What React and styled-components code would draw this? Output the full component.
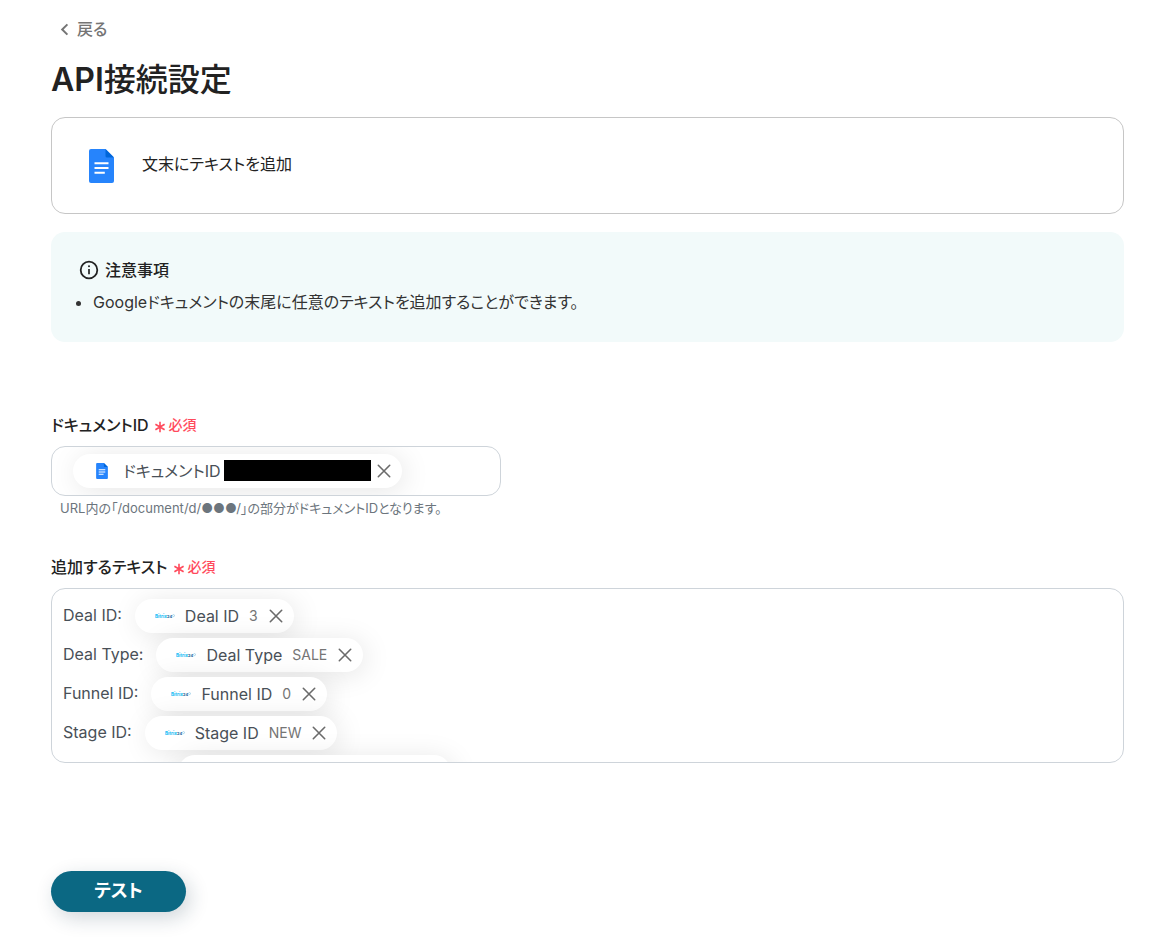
import React, { useState } from "react";
import styled, { createGlobalStyle } from "styled-components";

const GlobalStyle = createGlobalStyle`
  * {
    box-sizing: border-box;
  }

  body {
    margin: 0;
    background: #fff;
    color: #222;
    font-family: Inter, "Noto Sans CJK JP", sans-serif;
    font-size: 16px;
    font-feature-settings: "palt";
  }
`;

const Page = styled.main`
  padding: 16px 49px 31px 51px;
`;

const BackLink = styled.a`
  display: flex;
  align-items: center;
  gap: 8px;
  width: fit-content;
  height: 26px;
  padding-left: 9px;
  color: #757575;
  font-size: 16px;
  font-weight: 500;
  line-height: 24px;
  text-decoration: none;
`;

const Title = styled.h1`
  margin: 14px 0 13px;
  font-size: 32px;
  font-weight: 500;
  line-height: 48px;

  & span {
    font-weight: 600;
  }
`;

const ActionCard = styled.section`
  display: flex;
  align-items: center;
  gap: 28px;
  height: 97px;
  padding: 0 37px;
  border: 1px solid #c6c6c6;
  border-radius: 14px;

  & p {
    margin: 0;
    padding-bottom: 4px;
    line-height: 24px;
  }
`;

const Notice = styled.section`
  margin-top: 18px;
  padding: 26px 28px;
  border-radius: 14px;
  background: #f2fafa;
`;

const NoticeTitle = styled.h2`
  display: flex;
  align-items: center;
  gap: 6px;
  margin: 0;
  font-size: 16px;
  font-weight: 500;
  line-height: 24px;
`;

const NoticeList = styled.ul`
  margin: 6px 0 0;
  padding-left: 14px;
  color: #333;
  line-height: 28px;
`;

const Field = styled.div`
  margin-top: ${(props) => props.$gap}px;
`;

const FieldLabel = styled.label`
  display: flex;
  align-items: center;
  gap: 5px;
  margin-bottom: 9px;
  font-size: 16px;
  font-weight: 500;
  line-height: 24px;
`;

const Required = styled.span`
  display: inline-flex;
  align-items: center;
  gap: 3px;
  color: #ff4a5c;
  font-size: 14px;

  & svg {
    margin-top: 3px;
  }
`;

const InputBox = styled.div`
  display: flex;
  align-items: center;
  width: 450px;
  max-width: 100%;
  height: 50px;
  padding: 0 21px;
  border: 1px solid #ced4da;
  border-radius: 14px;
  overflow: hidden;
`;

const TextInput = styled.input`
  flex: 1;
  min-width: 0;
  border: 0;
  outline: 0;
  background: transparent;
  font: inherit;
`;

const HelpText = styled.p`
  margin: 2px 0 0 9px;
  color: #6c757d;
  font-size: 13px;
  line-height: 20px;
`;

const Editor = styled.div`
  height: 175px;
  padding: 7px 11px;
  border: 1px solid #ced4da;
  border-radius: 14px;
  outline: 0;
  overflow: hidden;
  color: #495057;
`;

const Line = styled.div`
  display: flex;
  align-items: center;
  gap: 13px;
  height: 39px;
`;

const LineLabel = styled.span`
  padding-bottom: 2px;
`;

const ChipBox = styled.span`
  display: inline-flex;
  align-items: center;
  flex: none;
  gap: 10px;
  height: 34px;
  padding: 0 10px 0 20px;
  border-radius: 17px;
  background: #fff;
  box-shadow: 3px 3px 28px rgba(0, 0, 0, 0.1);
  color: #495057;
  line-height: 24px;
`;

const EmptyChip = styled(ChipBox)`
  width: 273px;
  margin-left: 115px;
`;

const ChipValue = styled.span`
  color: #757575;
  font-size: 14px;
`;

const Redacted = styled.span`
  width: 147px;
  height: 21px;
  margin: 0 -5px 2px -7px;
  background: #000;
`;

const RemoveButton = styled.button`
  display: flex;
  padding: 0;
  border: 0;
  background: none;
  color: #6b6b6b;
  cursor: pointer;
`;

const TestButton = styled.button`
  display: block;
  width: 135px;
  height: 41px;
  margin-top: 108px;
  padding: 0 0 5px;
  border: 0;
  border-radius: 21px;
  background: #0b6883;
  box-shadow: 4px 6px 20px rgba(20, 50, 70, 0.2);
  color: #fff;
  font: inherit;
  font-size: 18px;
  font-weight: 700;
  cursor: pointer;
`;

const BackIcon = () => (
  <svg width="9" height="13" viewBox="0 0 9 13" fill="none" aria-hidden="true">
    <path d="M7.4 1.4 2.2 6.5l5.2 5.1" stroke="currentColor" strokeWidth="2" />
  </svg>
);

const DocsIcon = ({ width, height }) => (
  <svg width={width} height={height} viewBox="0 0 25 34" aria-hidden="true">
    <path
      d="M2 0h14.500L25 8.500V32a2 2 0 0 1-2 2H2a2 2 0 0 1-2-2V2a2 2 0 0 1 2-2z"
      fill="#2684fc"
    />
    <path d="M16.500 0 25 8.500h-7a1.500 1.500 0 0 1-1.500-1.500z" fill="#0066da" />
    <path
      d="M5.500 13.200h14v2h-14zM5.500 18h14v2h-14zM5.500 22.800h10.300v2H5.500z"
      fill="#fff"
    />
  </svg>
);

const InfoIcon = () => (
  <svg width="20" height="20" viewBox="0 0 20 20" fill="none" aria-hidden="true">
    <circle cx="10" cy="10" r="8.300" stroke="#222" strokeWidth="1.800" />
    <circle cx="10" cy="6.300" r="1" fill="#222" />
    <path d="M10 9v5.200" stroke="#222" strokeWidth="1.700" />
  </svg>
);

const AsteriskIcon = () => (
  <svg width="12" height="12" viewBox="0 0 12 12" aria-hidden="true">
    <path
      d="M6 .8v10.400M1.400 3.300l9.200 5.400M10.600 3.300 1.400 8.700"
      stroke="currentColor"
      strokeWidth="1.600"
    />
  </svg>
);

const CloseIcon = () => (
  <svg width="16" height="16" viewBox="0 0 16 16" fill="none" aria-hidden="true">
    <path
      d="m2.300 2.300 11.400 11.400M13.700 2.300 2.300 13.700"
      stroke="currentColor"
      strokeWidth="1.600"
      strokeLinecap="round"
    />
  </svg>
);

const BitrixLogo = () => (
  <svg width="20" height="8" viewBox="0 0 20 8" aria-hidden="true">
    <text x="0" y="5.600" fontSize="4.500" fontWeight="800" fill="#1fc0f5">
      Bitrix
    </text>
    <text x="12" y="5.600" fontSize="4" fontWeight="700" fill="#215f98">
      24
    </text>
    <circle cx="18.500" cy="3.600" r="1" fill="none" stroke="#7fc0e0" strokeWidth=".6" />
  </svg>
);

const Chip = ({ icon, name, children, onRemove }) => (
  <ChipBox contentEditable={false}>
    {icon}
    <span>{name}</span>
    {children}
    <RemoveButton type="button" aria-label={`${name} ×`} onClick={onRemove}>
      <CloseIcon />
    </RemoveButton>
  </ChipBox>
);

const DocumentIcon = styled.span`
  display: flex;
  padding: 0 5px 0 3px;
`;

const RequiredMark = () => (
  <Required>
    <AsteriskIcon />
    必須
  </Required>
);

const initialRows = [
  { name: "Deal ID", value: "3" },
  { name: "Deal Type", value: "SALE" },
  { name: "Funnel ID", value: "0" },
  { name: "Stage ID", value: "NEW" },
];

const App = () => {
  const [rows, setRows] = useState(initialRows);
  const [hasDocument, setHasDocument] = useState(true);

  const removeRow = (name) => {
    setRows(rows.filter((row) => row.name !== name));
  };

  return (
    <>
      <GlobalStyle />
      <Page>
        <BackLink href="#back">
          <BackIcon />
          戻る
        </BackLink>
        <Title>
          <span>API</span>接続設定
        </Title>

        <ActionCard>
          <DocsIcon width={25} height={34} />
          <p>文末にテキストを追加</p>
        </ActionCard>

        <Notice>
          <NoticeTitle>
            <InfoIcon />
            注意事項
          </NoticeTitle>
          <NoticeList>
            <li>Googleドキュメントの末尾に任意のテキストを追加することができます。</li>
          </NoticeList>
        </Notice>

        <Field $gap={71}>
          <FieldLabel htmlFor="document-id">
            ドキュメントID
            <RequiredMark />
          </FieldLabel>
          <InputBox>
            {hasDocument && (
              <Chip
                icon={
                  <DocumentIcon>
                    <DocsIcon width={12} height={16} />
                  </DocumentIcon>
                }
                name="ドキュメントID"
                onRemove={() => setHasDocument(false)}
              >
                <Redacted />
              </Chip>
            )}
            <TextInput id="document-id" type="text" />
          </InputBox>
          <HelpText>
            URL内の「/document/d/●●●/」の部分がドキュメントIDとなります。
          </HelpText>
        </Field>

        <Field $gap={37}>
          <FieldLabel as="div" id="append-text-label">
            追加するテキスト
            <RequiredMark />
          </FieldLabel>
          <Editor
            role="textbox"
            aria-multiline="true"
            aria-labelledby="append-text-label"
            contentEditable
            suppressContentEditableWarning
          >
            {rows.map(({ name, value }) => (
              <Line key={name}>
                <LineLabel>{name}:</LineLabel>
                <Chip
                  icon={<BitrixLogo />}
                  name={name}
                  onRemove={() => removeRow(name)}
                >
                  <ChipValue>{value}</ChipValue>
                </Chip>
              </Line>
            ))}
            <Line>
              <EmptyChip contentEditable={false} />
            </Line>
          </Editor>
        </Field>

        <TestButton type="button">テスト</TestButton>
      </Page>
    </>
  );
};

export default App;
